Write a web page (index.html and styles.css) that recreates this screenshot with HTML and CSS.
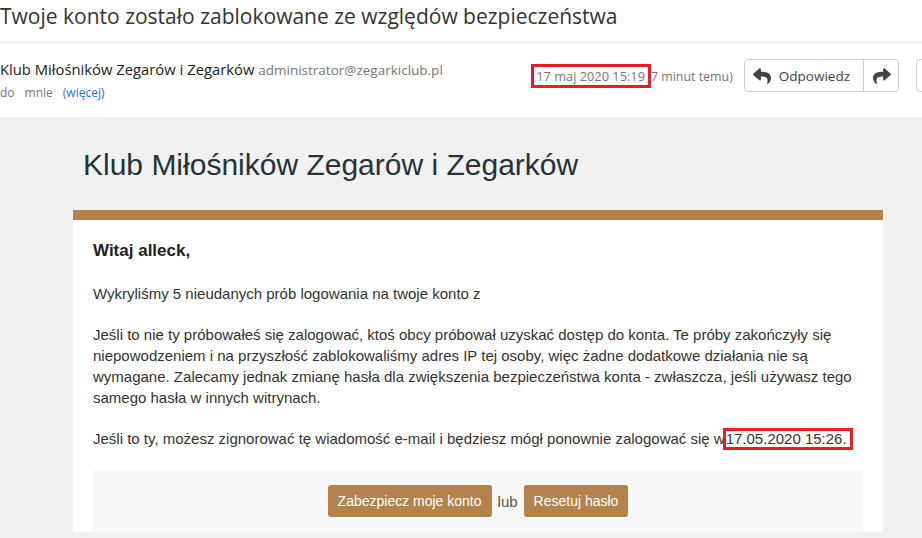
FILE: index.html
```html
<!DOCTYPE html>
<html lang="pl">
<head>
<meta charset="utf-8">
<title>Twoje konto zostało zablokowane</title>
<link rel="stylesheet" href="styles.css">
</head>
<body>
<div class="subject">Twoje konto zostało zablokowane ze względów bezpieczeństwa</div>
<div class="meta">
  <div class="from">
    <div class="sender"><span class="name">Klub Miłośników Zegarów i Zegarków</span> <span class="email">administrator@zegarkiclub.pl</span></div>
    <div class="to"><span>do</span><span>mnie</span><a class="more" href="#">(więcej)</a></div>
  </div>
  <div class="actions">
    <span class="date"><span class="mark">17 maj 2020 15:19</span><span class="ago">7 minut temu)</span></span>
    <div class="btn-group">
      <button class="btn reply" type="button">
        <svg class="ico" viewBox="0 0 512 512"><path d="M8.309 189.836L184.313 37.851C199.719 24.546 224 35.347 224 56.015v80.053c160.629 1.839 288 34.032 288 186.258 0 61.441-39.581 122.309-83.333 154.132-13.653 9.931-33.111-2.533-28.077-18.631 45.344-145.012-21.507-183.51-176.59-185.742V360c0 20.7-24.3 31.453-39.687 18.164l-176.004-152c-11.071-9.562-11.086-26.753 0-36.328z"/></svg>
        Odpowiedz
      </button>
      <button class="btn fwd" type="button">
        <svg class="ico" viewBox="0 0 512 512"><path d="M503.691 189.836L327.687 37.851C312.281 24.546 288 35.347 288 56.015v80.053C127.371 137.907 0 170.1 0 322.326c0 61.441 39.581 122.309 83.333 154.132 13.653 9.931 33.111-2.533 28.077-18.631C66.066 312.814 132.917 274.316 288 272.085V360c0 20.7 24.3 31.453 39.687 18.164l176.004-152c11.071-9.562 11.086-26.753 0-36.328z"/></svg>
      </button>
    </div>
    <button class="btn more-btn" type="button" aria-label="Więcej">
      <svg class="ico" viewBox="0 0 320 512"><path d="M31.3 192h257.3c17.8 0 26.7 21.5 14.1 34.1L174.1 354.8c-7.8 7.8-20.5 7.8-28.3 0L17.2 226.1C4.6 213.5 13.5 192 31.3 192z"/></svg>
    </button>
  </div>
</div>
<div class="mail">
  <div class="wrap">
    <h1 class="brand">Klub Miłośników Zegarów i Zegarków</h1>
    <div class="card">
      <p class="hello">Witaj alleck,</p>
      <p>Wykryliśmy 5 nieudanych prób logowania na twoje konto z</p>
      <p>Jeśli to nie ty próbowałeś się zalogować, ktoś obcy próbował uzyskać dostęp do konta. Te próby zakończyły się niepowodzeniem i na przyszłość zablokowaliśmy adres IP tej osoby, więc żadne dodatkowe działania nie są wymagane. Zalecamy jednak zmianę hasła dla zwiększenia bezpieczeństwa konta - zwłaszcza, jeśli używasz tego samego hasła w innych witrynach.</p>
      <p>Jeśli to ty, możesz zignorować tę wiadomość e-mail i będziesz mógł ponownie zalogować się w<span class="mark2">17.05.2020 15:26.</span></p>
      <div class="cta">
        <a class="gold" href="#">Zabezpiecz moje konto</a>
        <span class="or">lub</span>
        <a class="gold" href="#">Resetuj hasło</a>
      </div>
    </div>
  </div>
</div>
</body>
</html>
```

FILE: styles.css
```css
* { box-sizing: border-box; }
html, body { margin: 0; padding: 0; }
body {
  width: 922px;
  height: 538px;
  overflow: hidden;
  background: #fff;
  font-family: "Open Sans", "Noto Sans", sans-serif;
  color: #333;
}
.subject {
  height: 43px;
  padding: 2px 0 0 0;
  font-size: 21px;
  line-height: 28px;
  color: #333;
  border-bottom: 1px solid #e5e5e5;
  white-space: nowrap;
}
.meta {
  height: 74px;
  display: flex;
  justify-content: space-between;
  align-items: flex-start;
}
.from { padding-top: 15px; }
.sender { font-size: 14.8px; line-height: 22px; white-space: nowrap; }
.name { color: #222; }
.email { font-size: 13.5px; color: #777; }
.to { display: flex; gap: 10px; font-size: 12px; color: #777; line-height: 22px; margin-top: 1px; }
.more { color: #1a73e8; text-decoration: none; }
.actions {
  display: flex;
  align-items: center;
  padding-top: 16px;
  margin-right: -64px;
  white-space: nowrap;
}
.date { font-size: 12.8px; color: #777; margin-right: 11px; }
.ago { font-size: 12.4px; }
.mark {
  display: inline-block;
  border: 3px solid #ec1c24;
  padding: 0 3px 0 2px;
  line-height: 18px;
}
.btn-group {
  display: flex;
  border: 1px solid #ccc;
  border-radius: 4px;
  height: 33px;
  background: #fff;
}
.btn {
  display: flex;
  align-items: center;
  gap: 8px;
  border: 0;
  background: #fff;
  font-family: "Open Sans", "Noto Sans", sans-serif;
  font-size: 13.5px;
  color: #444;
  padding: 0 13px 0 8px;
  height: 31px;
}
.reply { border-right: 1px solid #ccc; border-radius: 4px 0 0 4px; }
.fwd { padding: 0 7px 0 9px; border-radius: 0 4px 4px 0; }
.ico { width: 18px; height: 18px; fill: #444; }
.more-btn {
  margin-left: 17px;
  border: 1px solid #ccc;
  border-radius: 4px;
  height: 33px;
  width: 70px;
  padding: 0 12px;
}
.mail {
  background: #f1f1f1;
  height: 421px;
  padding-left: 73px;
}
.wrap { width: 810px; }
.brand {
  margin: 0;
  padding: 30px 10px 0 10px;
  height: 93px;
  font-family: "Liberation Sans", Arial, sans-serif;
  font-weight: normal;
  font-size: 30px;
  line-height: 36px;
  color: #263238;
}
.card {
  background: #fff;
  border-top: 10px solid #b4834b;
  padding: 20px 20px 0 20px;
  font-family: "Liberation Sans", Arial, sans-serif;
  font-size: 15px;
  line-height: 21px;
  color: #333;
}
.card p { margin: 0 0 20px 0; }
.card .hello { font-weight: bold; font-size: 17px; color: #222; margin-bottom: 22px; }
.mark2 {
  display: inline-block;
  border: 3px solid #ec1c24;
  padding: 0 3px 0 0;
  line-height: 16px;
  margin-left: -2px;
}
.cta {
  background: #f8f8f8;
  padding: 15px 0;
  display: flex;
  justify-content: center;
  align-items: center;
  gap: 6px;
}
.gold {
  display: inline-block;
  background: #b4834b;
  color: #fff;
  text-decoration: none;
  border-radius: 3px;
  height: 32px;
  line-height: 32px;
  padding: 0 10px;
  font-size: 14px;
}
.or { color: #555; font-size: 15px; }
```
